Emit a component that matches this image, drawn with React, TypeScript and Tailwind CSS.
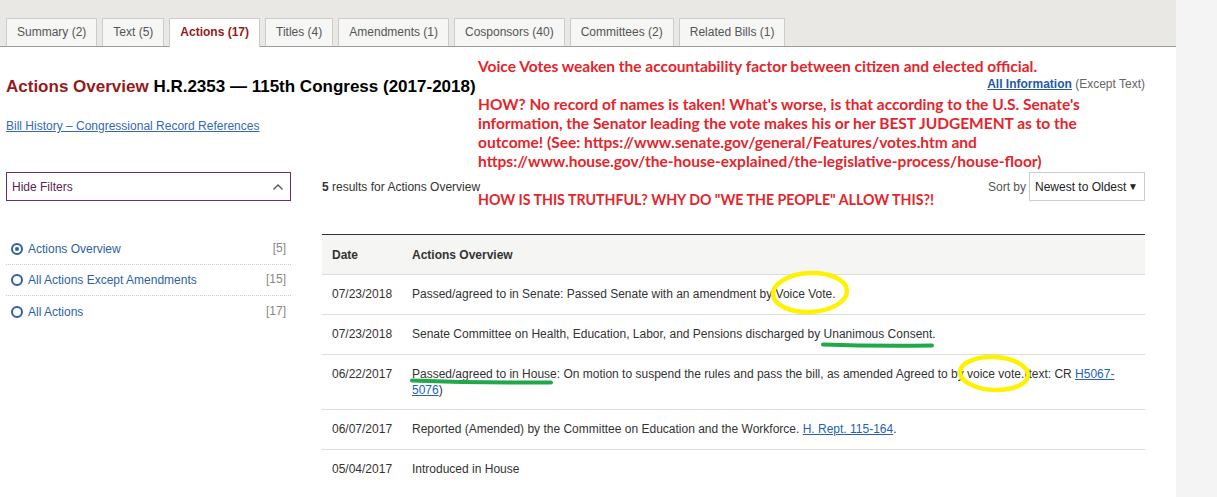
import React from 'react';

const tabs = [
  { label: 'Summary (2)' },
  { label: 'Text (5)' },
  { label: 'Actions (17)', active: true },
  { label: 'Titles (4)' },
  { label: 'Amendments (1)' },
  { label: 'Cosponsors (40)' },
  { label: 'Committees (2)' },
  { label: 'Related Bills (1)' },
];

const filters = [
  { label: 'Actions Overview', count: '[5]', checked: true },
  { label: 'All Actions Except Amendments', count: '[15]' },
  { label: 'All Actions', count: '[17]' },
];

function Radio({ checked }: { checked?: boolean }) {
  return (
    <span className="flex h-[12px] w-[12px] shrink-0 items-center justify-center rounded-full border-2 border-[#2d5fa6]">
      {checked && <span className="h-[4px] w-[4px] rounded-full bg-[#2d5fa6]" />}
    </span>
  );
}

function Row({ date, children, tall, last }: { date: string; children: React.ReactNode; tall?: boolean; last?: boolean }) {
  return (
    <div
      className={
        'grid grid-cols-[90px_1fr] leading-[16px] ' +
        (tall ? 'h-[55px] ' : 'h-[40px] ') +
        (last ? '' : 'border-b border-[#dddddd]')
      }
    >
      <div className="pl-[10px] pt-[11px]">{date}</div>
      <div className="pr-[10px] pt-[11px]">{children}</div>
    </div>
  );
}

export default function App() {
  return (
    <div className="relative flex min-h-[497px] w-full font-['Liberation_Sans',Arial,sans-serif] text-[12px] text-[#333]">
      <div className="w-[1176px] shrink-0 bg-white">
        {/* tab bar */}
        <div className="flex h-[47px] items-end gap-[5px] border-b border-[#9e9e9e] bg-[#e9e8e5] pl-[6px]">
          {tabs.map((t) =>
            t.active ? (
              <div
                key={t.label}
                className="-mb-px h-[29px] border border-b-0 border-[#cccccc] bg-white px-[10px] pb-px leading-[27px] font-bold text-[#951b1b]"
              >
                {t.label}
              </div>
            ) : (
              <div
                key={t.label}
                className="h-[28px] border border-b-0 border-[#cccccc] bg-[#f6f6f5] px-[10px] leading-[27px] text-[#555]"
              >
                {t.label}
              </div>
            )
          )}
        </div>

        <div className="pl-[6px] pr-[31px] pt-[28px]">
          <div className="flex items-start justify-between">
            <h1 className="text-[17px] font-bold leading-[24px] text-black">
              <span className="text-[#951b1b]">Actions Overview</span> H.R.2353 — 115th Congress (2017-2018)
            </h1>
            <div className="mt-px leading-[16px]">
              <a className="font-bold text-[#1f5aa8] underline">All Information</a>{' '}
              <span className="text-[#666]">(Except Text)</span>
            </div>
          </div>

          <div className="mt-[19px] leading-[16px]">
            <a className="text-[#3468b5] underline">Bill History – Congressional Record References</a>
          </div>

          <div className="mt-[38px] flex gap-[31px]">
            {/* filters */}
            <div className="w-[285px] shrink-0">
              <div className="flex h-[29px] items-center justify-between border border-[#6b2d62] pl-[5px] pr-[6px] text-[#5b2456]">
                <span>Hide Filters</span>
                <svg width="12" height="8" viewBox="0 0 12 8" fill="none">
                  <polyline points="1.5,6.5 6,2 10.5,6.5" stroke="#555" strokeWidth="1.3" />
                </svg>
              </div>
              <div className="mt-[33px]">
                {filters.map((f, i) => (
                  <div
                    key={f.label}
                    className={
                      'flex h-[31px] items-center justify-between pl-[5px] pr-[5px] ' +
                      (i < filters.length - 1 ? 'border-b border-dotted border-[#c8c8c8]' : '')
                    }
                  >
                    <div className="flex items-center gap-[5px] text-[#2d5fa6]">
                      <Radio checked={f.checked} />
                      <span>{f.label}</span>
                    </div>
                    <span className="-mt-[2px] text-[#888]">{f.count}</span>
                  </div>
                ))}
              </div>
            </div>

            {/* results */}
            <div className="w-[823px] shrink-0">
              <div className="flex h-[29px] items-center justify-between">
                <div>
                  <b>5</b> results for Actions Overview
                </div>
                <div className="flex items-center gap-[3px]">
                  <span className="text-[#555]">Sort by</span>
                  <div className="flex h-[29px] w-[116px] items-center justify-between border border-[#cccccc] pl-[5px] pr-[6px] text-[#222]">
                    <span>Newest to Oldest</span>
                    <span className="text-[10px]">▼</span>
                  </div>
                </div>
              </div>

              <div className="mt-[33px]">
                <div className="grid h-[41px] grid-cols-[90px_1fr] items-center border-y border-t-[#333] border-b-[#dddddd] bg-[#f5f5f4] font-bold">
                  <div className="pl-[10px]">Date</div>
                  <div>Actions Overview</div>
                </div>
                <Row date="07/23/2018">Passed/agreed to in Senate: Passed Senate with an amendment by Voice Vote.</Row>
                <Row date="07/23/2018">
                  Senate Committee on Health, Education, Labor, and Pensions discharged by Unanimous Consent.
                </Row>
                <Row date="06/22/2017" tall>
                  Passed/agreed to in House: On motion to suspend the rules and pass the bill, as amended Agreed to by
                  voice vote.(text: CR <a className="text-[#2462b4] underline">H5067-5076</a>)
                </Row>
                <Row date="06/07/2017">
                  Reported (Amended) by the Committee on Education and the Workforce.{' '}
                  <a className="text-[#2462b4] underline">H. Rept. 115-164</a>.
                </Row>
                <Row date="05/04/2017" last>
                  Introduced in House
                </Row>
              </div>
            </div>
          </div>
        </div>
      </div>
      <div className="flex-1 bg-[#f4f4f4]" />

      {/* red annotation over the page */}
      <div className="pointer-events-none absolute left-[478px] top-[57px] whitespace-nowrap font-['Lato',sans-serif] text-[15.5px] font-bold leading-[19px] text-[#e4252c]">
        <p>Voice Votes weaken the accountability factor between citizen and elected official.</p>
        <p className="mt-[19px]">
          HOW? No record of names is taken! What's worse, is that according to the U.S. Senate's
          <br />
          information, the Senator leading the vote makes his or her BEST JUDGEMENT as to the
          <br />
          outcome! (See: https://www.senate.gov/general/Features/votes.htm and
          <br />
          https://www.house.gov/the-house-explained/the-legislative-process/house-floor)
        </p>
        <p className="mt-[19px] text-[14.2px]">HOW IS THIS TRUTHFUL? WHY DO "WE THE PEOPLE" ALLOW THIS?!</p>
      </div>

      {/* hand-drawn marks */}
      <svg className="pointer-events-none absolute left-0 top-0" width="1217" height="497" fill="none">
        <ellipse cx="810" cy="292.5" rx="37" ry="19.5" stroke="#fff200" strokeWidth="4.5" transform="rotate(-3 810 292.5)" />
        <ellipse cx="994" cy="373.5" rx="34" ry="16.5" stroke="#fff200" strokeWidth="4.5" transform="rotate(3 994 373.5)" />
        <path d="M823 344.5 Q878 346.5 932 345.5" stroke="#22a84a" strokeWidth="4" strokeLinecap="round" />
        <path d="M412 380.5 Q480 383 551 382.5" stroke="#22a84a" strokeWidth="4" strokeLinecap="round" />
      </svg>
    </div>
  );
}
